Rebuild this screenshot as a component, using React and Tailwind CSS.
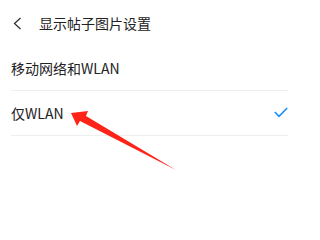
const font = { fontFamily: '"Noto Sans CJK SC", "Noto Sans", sans-serif' };

export default function App() {
  return (
    <div
      className="relative w-[301px] h-[204px] bg-white text-[#222] overflow-hidden"
      style={font}
    >
      {/* header */}
      <div className="flex items-center h-[46px]">
        <svg
          className="ml-[13px]"
          width="9"
          height="13"
          viewBox="0 0 9 13"
          fill="none"
        >
          <path
            d="M7.5 1 L1.5 6.5 L7.5 12"
            stroke="#333"
            strokeWidth="1.3"
          />
        </svg>
        <span className="ml-[17px] text-[14px] leading-none">
          显示帖子图片设置
        </span>
      </div>

      {/* options */}
      <ul className="list-none ml-[11px] mr-[13px]">
        <li className="flex items-center justify-between h-[45px] border-b border-[#eeeeee]">
          <span className="text-[14px] leading-none">移动网络和WLAN</span>
        </li>
        <li className="flex items-center justify-between h-[45px] border-b border-[#eeeeee]">
          <span className="text-[14px] leading-none">仅WLAN</span>
          <svg width="14" height="11" viewBox="0 0 14 11" fill="none" className="mb-[1px]">
            <path d="M0.8 5 L5 9.3 L13.2 1" stroke="#1a8cff" strokeWidth="1.6" />
          </svg>
        </li>
      </ul>

      {/* annotation arrow */}
      <svg
        className="absolute left-0 top-0"
        width="301"
        height="204"
        viewBox="0 0 301 204"
      >
        <polygon
          points="71,113 88,111 86,116 176,170 80,121 77,126"
          fill="#ff2418"
        />
      </svg>
    </div>
  );
}
